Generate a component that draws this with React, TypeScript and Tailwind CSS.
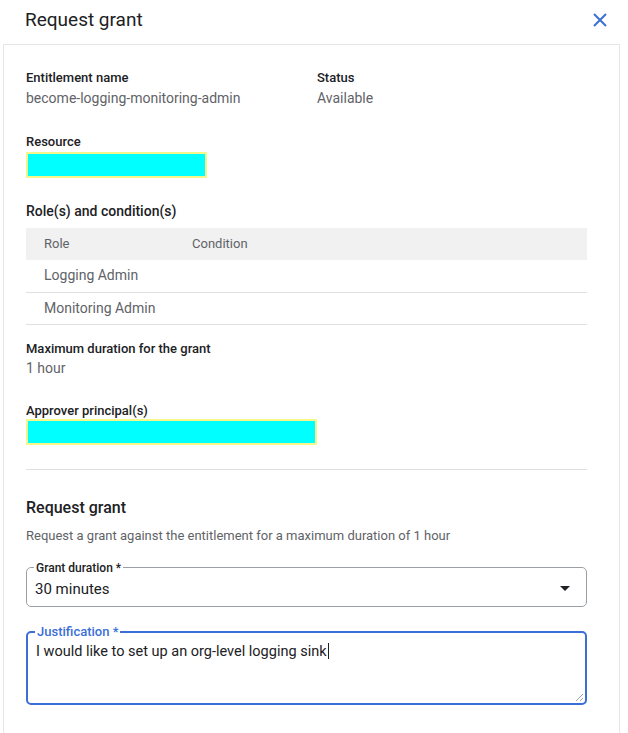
import React from 'react';

const font = { fontFamily: 'Roboto, "Noto Sans", Arial, sans-serif' };

function Field({ label, children }: { label: string; children: React.ReactNode }) {
  return (
    <div className="flex flex-col">
      <div className="text-[13px] font-medium leading-[16px] text-[#202124]">{label}</div>
      {children}
    </div>
  );
}

function Redacted({ width, top }: { width: string; top: string }) {
  return <div className={`${width} ${top} h-[26px] border-[2px] border-[#f5f78a] bg-[#00ffff]`} />;
}

export default function App() {
  const roles = ['Logging Admin', 'Monitoring Admin'];

  return (
    <div className="h-[733px] w-[628px] overflow-hidden bg-white" style={font}>
      <div className="flex h-[44px] items-center justify-between pb-[4px] pl-[25px] pr-[16px]">
        <h1 className="text-[19px] leading-[24px] text-[#202124]">Request grant</h1>
        <button className="flex h-[24px] w-[24px] items-center justify-center">
          <svg width="16" height="16" viewBox="0 0 16 16">
            <path d="M2 2L14 14M14 2L2 14" stroke="#3b6fd6" strokeWidth="2" fill="none" />
          </svg>
        </button>
      </div>

      <div className="ml-[3px] mr-[8px] h-full border-x border-t border-[#e6e6e6] pl-[22px] pr-[32px] pt-[25px]">
        <div className="flex">
          <div className="w-[291px]">
            <Field label="Entitlement name">
              <div className="mt-[2px] text-[14px] leading-[20px] text-[#5f6368]">become-logging-monitoring-admin</div>
            </Field>
          </div>
          <Field label="Status">
            <div className="mt-[2px] text-[14px] leading-[20px] text-[#5f6368]">Available</div>
          </Field>
        </div>

        <div className="mt-[26px]">
          <Field label="Resource">
            <Redacted width="w-[181px]" top="mt-[2px]" />
          </Field>
        </div>

        <div className="mt-[25px] text-[14px] font-medium leading-[16px] text-[#202124]">Role(s) and condition(s)</div>
        <table className="mt-[9px] w-full text-left text-[13px]">
          <thead>
            <tr className="h-[32px] bg-[#f1f1f1] text-[#5f6368]">
              <th className="w-[166px] pl-[18px] font-normal">Role</th>
              <th className="font-normal">Condition</th>
            </tr>
          </thead>
          <tbody>
            {roles.map((r) => (
              <tr key={r} className="h-[32px] border-b border-[#e0e0e0] text-[14px] text-[#5f6368]">
                <td className="pl-[18px]">{r}</td>
                <td></td>
              </tr>
            ))}
          </tbody>
        </table>

        <div className="mt-[16px]">
          <Field label="Maximum duration for the grant">
            <div className="mt-[1px] text-[14px] leading-[20px] text-[#5f6368]">1 hour</div>
          </Field>
        </div>

        <div className="mt-[25px]">
          <Field label="Approver principal(s)">
            <Redacted width="w-[291px]" top="mt-0" />
          </Field>
        </div>

        <div className="mt-[24px] border-t border-[#e0e0e0]" />

        <h2 className="mt-[28px] text-[16px] font-medium leading-[20px] text-[#202124]">Request grant</h2>
        <p className="mt-[10px] text-[13px] leading-[16px] text-[#5f6368]">
          Request a grant against the entitlement for a maximum duration of 1 hour
        </p>

        <fieldset className="mt-[18px] h-[45px] rounded-[5px] border border-[#9aa0a6] pl-[8px] pr-[16px]">
          <legend className="ml-[-1px] px-[2px] text-[12px] font-medium leading-[12px] text-[#202124]">
            Grant duration *
          </legend>
          <div className="flex items-center justify-between pt-[5px]">
            <span className="text-[15px] leading-[20px] text-[#202124]">30 minutes</span>
            <svg width="10" height="5" viewBox="0 0 10 5">
              <path d="M0 0L10 0L5 5Z" fill="#202124" />
            </svg>
          </div>
        </fieldset>

        <fieldset className="relative mt-[18px] h-[80px] rounded-[5px] border-[2px] border-[#3b6fd6] pl-[8px] pr-[8px]">
          <legend className="ml-[-1px] px-[2px] text-[13px] font-medium leading-[14px] text-[#3b6fd6]">
            Justification *
          </legend>
          <div className="pt-[1px] text-[14.5px] leading-[20px] text-[#202124]">
            I would like to set up an org-level logging sink
            <span className="ml-[1px] inline-block h-[16px] w-[1px] translate-y-[3px] bg-[#202124]" />
          </div>
          <svg className="absolute bottom-[2px] right-[2px]" width="8" height="8" viewBox="0 0 8 8">
            <path d="M8 1L1 8M8 5L5 8" stroke="#9aa0a6" strokeWidth="1" />
          </svg>
        </fieldset>
      </div>
    </div>
  );
}
